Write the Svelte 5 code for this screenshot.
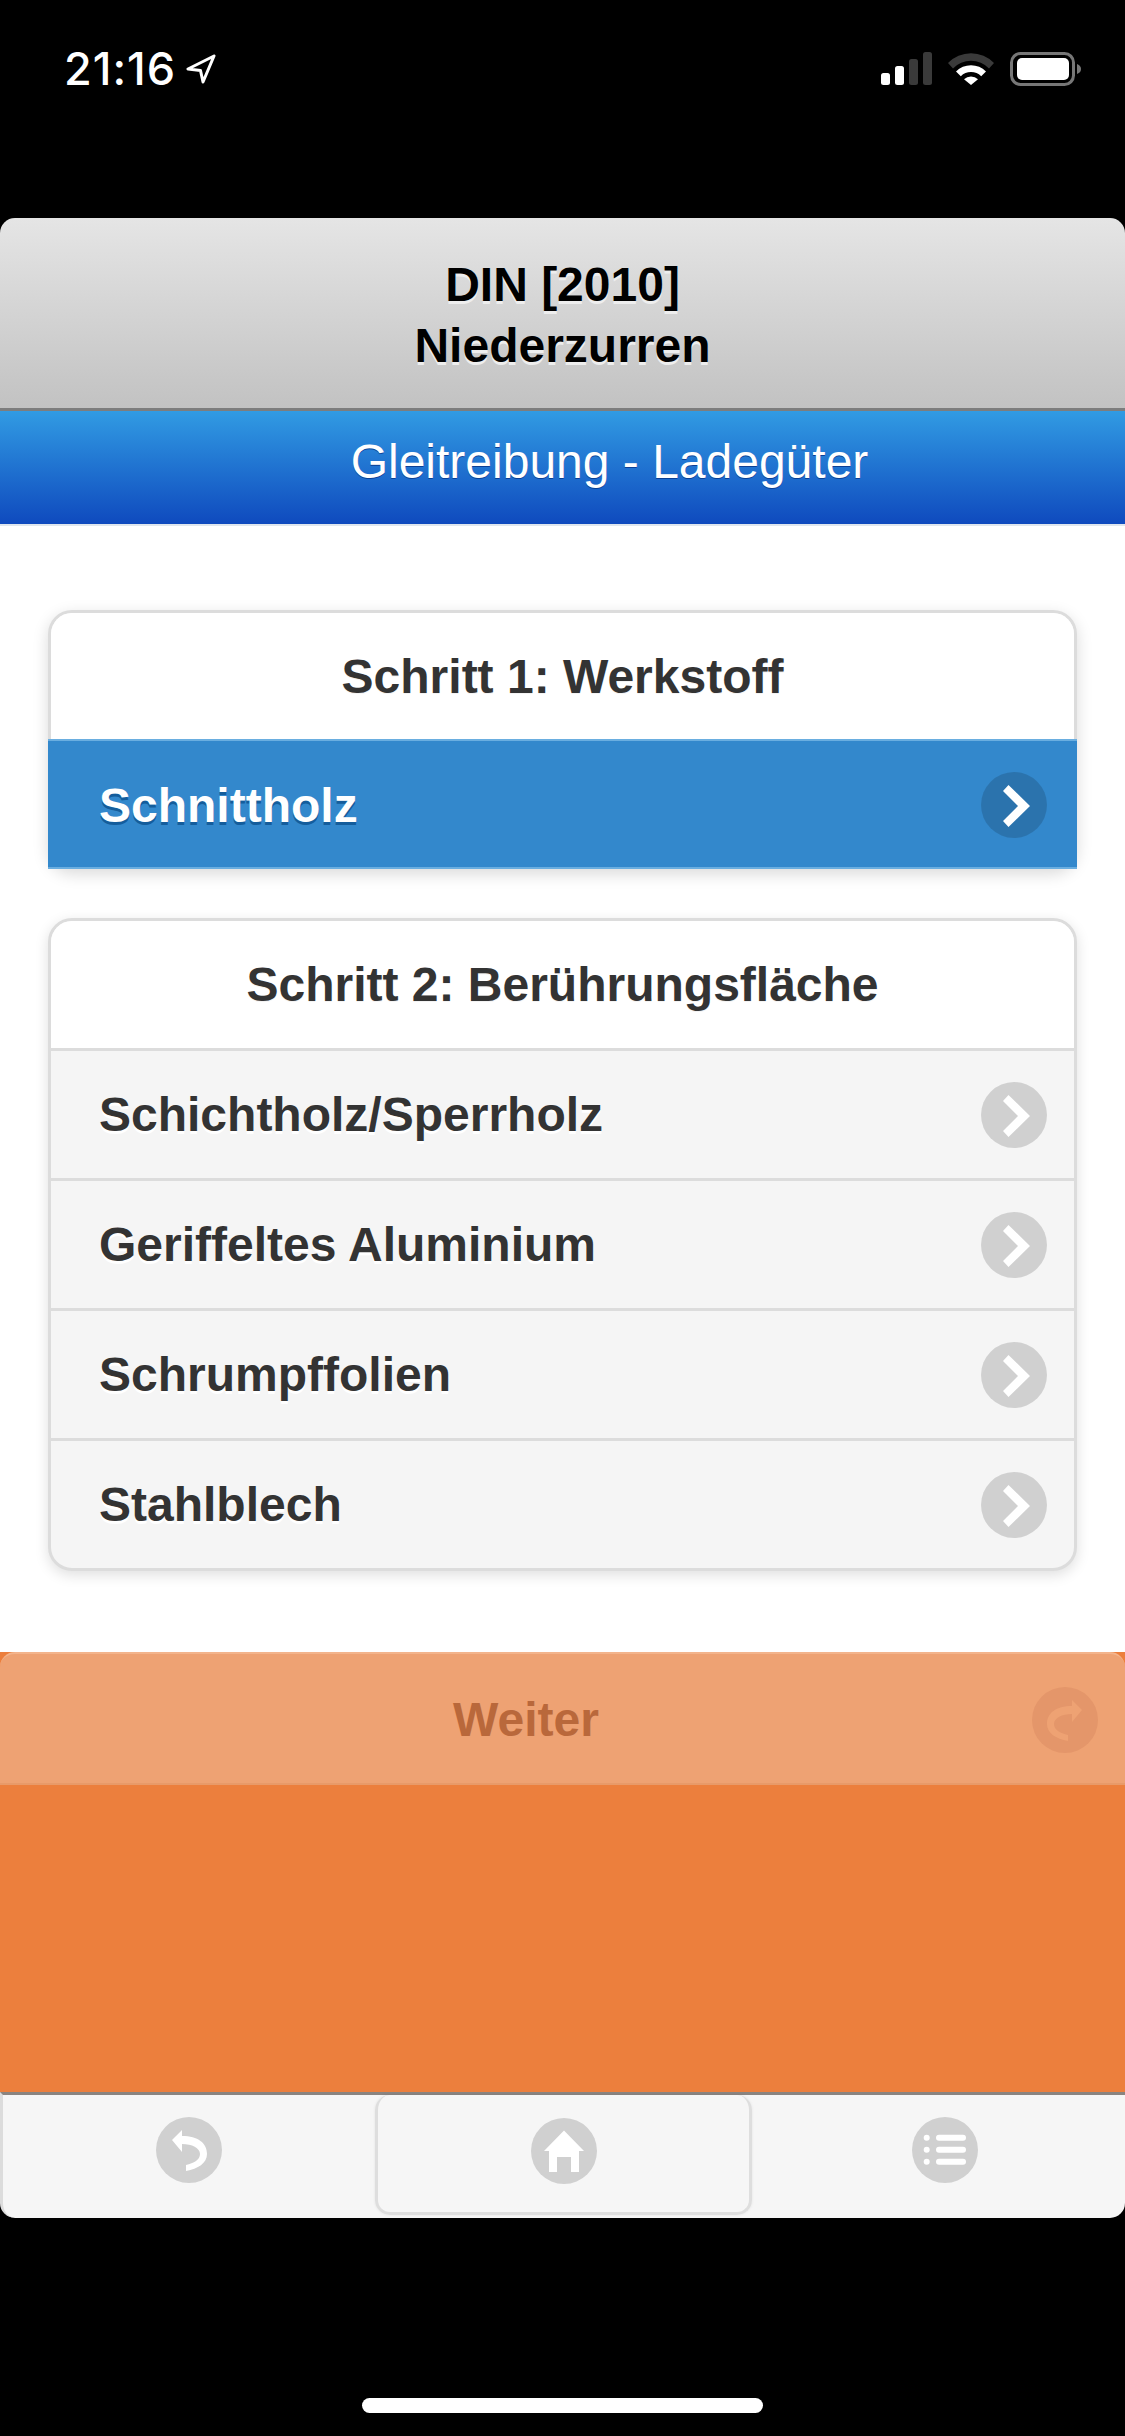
<script>
  const rows = ['Schichtholz/Sperrholz', 'Geriffeltes Aluminium', 'Schrumpffolien', 'Stahlblech'];
</script>

{#snippet chevron()}
  <svg class="ic" viewBox="0 0 66 66" aria-hidden="true">
    <path d="M27.500 13 L49 34 L27.500 55 L22 49 L37 34 L22 19 Z" fill="#fff" />
  </svg>
{/snippet}

<div class="phone">
  <header class="status">
    <div class="time">21:16
      <svg class="loc" viewBox="0 0 30 30" aria-hidden="true"><path d="M28 2 L2 15 L14.500 16.500 L17 28 Z" fill="none" stroke="#fff" stroke-width="3" stroke-linejoin="round" /></svg>
    </div>
    <div class="sys">
      <svg width="51" height="33" viewBox="0 0 51 33" aria-hidden="true">
        <rect x="0" y="21" width="9" height="12" rx="2.500" fill="#fff" />
        <rect x="14" y="14" width="9" height="19" rx="2.500" fill="#fff" />
        <rect x="28" y="7" width="9" height="26" rx="2.500" fill="#3a3a3a" />
        <rect x="42" y="0" width="9" height="33" rx="2.500" fill="#3a3a3a" />
      </svg>
      <svg width="46" height="33" viewBox="0 0 46 33" aria-hidden="true">
        <path d="M0 11 A32 32 0 0 1 46 11 L41 16.500 A25 25 0 0 0 5 16.500 Z" fill="#3a3a3a" />
        <path d="M8 19.500 A21 21 0 0 1 38 19.500 L33.200 24.300 A14.500 14.500 0 0 0 12.800 24.300 Z" fill="#fff" />
        <path d="M16 27.300 A10 10 0 0 1 30 27.300 L23 33 Z" fill="#fff" />
      </svg>
      <svg width="72" height="34" viewBox="0 0 72 34" aria-hidden="true">
        <rect x="1.500" y="1.500" width="62" height="31" rx="9" fill="none" stroke="#777" stroke-width="3" />
        <rect x="7" y="6" width="52" height="22" rx="5" fill="#fff" />
        <path d="M67 12 C70 13 71 15 71 17 C71 19 70 21 67 22 Z" fill="#777" />
      </svg>
    </div>
  </header>

  <div class="title">DIN [2010]<br />Niederzurren</div>
  <div class="subtitle"><span>Gleitreibung - Ladegüter</span></div>

  <main class="content">
    <section class="card first">
      <h2>Schritt 1: Werkstoff</h2>
      <div class="row active"><span>Schnittholz</span><i class="dot">{@render chevron()}</i></div>
    </section>
    <section class="card">
      <h2>Schritt 2: Berührungsfläche</h2>
      {#each rows as r}
        <div class="row"><span>{r}</span><i class="dot">{@render chevron()}</i></div>
      {/each}
    </section>
  </main>

  <div class="orange">
    <div class="next">
      <span>Weiter</span>
      <i class="dot">
        <svg class="ic" viewBox="0 0 66 66" aria-hidden="true">
          <path d="M50 23 L40 13 L40 19 C24 19 15 26 15 37 C15 46 24 52 36 54 L36 48 C28 46 22 43 22 37 C22 31 30 27 40 27 L40 35 Z" fill="#eea273" />
        </svg>
      </i>
    </div>
  </div>

  <nav class="nav">
    <div class="cell">
      <i class="dot">
        <svg class="ic" viewBox="0 0 66 66" aria-hidden="true">
          <path d="M16 23 L26 13 L26 19 C42 19 51 26 51 37 C51 46 42 52 30 54 L30 48 C38 46 44 43 44 37 C44 31 36 27 26 27 L26 35 Z" fill="#fff" />
        </svg>
      </i>
    </div>
    <div class="cell home">
      <i class="dot">
        <svg class="ic" viewBox="0 0 66 66" aria-hidden="true">
          <path d="M33 12.500 L53 33 L48 33 L48 54 L40 54 L40 39 L26 39 L26 54 L18 54 L18 33 L13 33 Z" fill="#fff" />
        </svg>
      </i>
    </div>
    <div class="cell last">
      <i class="dot">
        <svg class="ic" viewBox="0 0 66 66" aria-hidden="true">
          <circle cx="14.700" cy="20.700" r="3" fill="#fff" /><circle cx="14.700" cy="32.700" r="3" fill="#fff" /><circle cx="14.700" cy="44.700" r="3" fill="#fff" />
          <rect x="24" y="17.700" width="30" height="6" rx="3" fill="#fff" />
          <rect x="24" y="29.700" width="30" height="6" rx="3" fill="#fff" />
          <rect x="24" y="41.700" width="30" height="6" rx="3" fill="#fff" />
        </svg>
      </i>
    </div>
  </nav>

  <div class="bottom"><div class="indicator"></div></div>
</div>

<style>
  :global(body) { margin: 0; background: #000; }
  .phone {
    width: 1125px;
    height: 2436px;
    background: #000;
    display: flex;
    flex-direction: column;
    font-family: "Liberation Sans", Arial, sans-serif;
    overflow: hidden;
  }
  .status {
    height: 218px;
    flex: none;
    box-sizing: border-box;
    padding: 46px 43px 0 64px;
    display: flex;
    justify-content: space-between;
    align-items: flex-start;
    color: #fff;
  }
  .time { font: 500 45px/46px Inter, "Liberation Sans", sans-serif; letter-spacing: 1px; display: flex; align-items: center; gap: 10px; }
  .loc { width: 30px; height: 30px; }
  .sys { display: flex; gap: 16px; align-items: flex-start; padding-top: 6px; }

  .title {
    flex: none;
    box-sizing: border-box;
    padding-top: 36px;
    border-radius: 15px 15px 0 0;
    background: linear-gradient(#e5e5e5, #c2c2c2);
    border-bottom: 3px solid #7d7d7d;
    height: 193px;
    text-align: center;
    font-weight: 700;
    font-size: 48px;
    line-height: 61px;
    color: #000;
    text-shadow: 0 3px 0 #eee;
  }
  .subtitle {
    height: 113px;
    flex: none;
    display: flex;
    align-items: center;
    justify-content: center;
    padding: 0 0 12px 94px;
    box-sizing: border-box;
    background: linear-gradient(#319be3, #0f4abe);
    color: #fff;
    font-size: 48px;
    text-shadow: 0 1px 0 #0b3f95;
  }
  .content {
    background: #fff;
    flex: none;
    height: 1128px;
    box-sizing: border-box;
    border-top: 2px solid #dfe6ee;
    padding: 84px 48px 0;
    display: flex;
    flex-direction: column;
    gap: 49px;
  }
  .card {
    border: 3px solid #dcdcdc;
    border-radius: 24px;
    box-shadow: 0 4px 14px rgba(0, 0, 0, .13);
    background: #f5f5f5;
    width: 1029px;
    box-sizing: border-box;
  }
  .card.first { border-bottom: 0; box-shadow: 0 5px 16px rgba(0, 0, 0, .15); }
  h2 {
    margin: 0;
    height: 127px;
    box-sizing: border-box;
    background: #fff;
    border-radius: 21px 21px 0 0;
    color: #333;
    font-size: 48px;
    font-weight: 700;
    line-height: 127px;
    text-align: center;
    text-shadow: 0 1px 0 #f3f3f3;
  }
  .card.first h2 { height: 126px; }
  .row {
    height: 130px;
    box-sizing: border-box;
    border-top: 3px solid #dcdcdc;
    padding: 0 27px 0 48px;
    display: flex;
    align-items: center;
    justify-content: space-between;
    color: #333;
    font-size: 48px;
    font-weight: 700;
    text-shadow: 0 3px 0 #fff;
  }
  .card > .row:last-child { border-radius: 0 0 21px 21px; }
  .card.first .row {
    margin: 0 -3px;
    padding: 2px 30px 0 51px;
    border-radius: 0;
    border-top: 2px solid #6aaee0;
    border-bottom: 2px solid #6aaee0;
    background: #3388cc;
    color: #fff;
    text-shadow: 0 3px 0 #145d9c;
  }
  .dot {
    display: block;
    width: 66px;
    height: 66px;
    border-radius: 50%;
    background: rgba(0, 0, 0, .15);
    flex: none;
  }
  .ic { display: block; width: 66px; height: 66px; }

  .orange {
    flex: none;
    height: 440px;
    background: #ec7f3d;
  }
  .next {
    height: 133px;
    box-sizing: border-box;
    border-radius: 15px 15px 0 0;
    background: #eea273;
    border-top: 2px solid #f3b48c;
    border-bottom: 2px solid #e89a69;
    padding: 2px 27px 0 453px;
    display: flex;
    align-items: center;
    justify-content: space-between;
    color: #b9683b;
    font-size: 48px;
    font-weight: 700;
  }
  .next .dot { background: #e4966a; }

  .nav {
    flex: none;
    height: 126px;
    box-sizing: border-box;
    background: #f6f6f6;
    border-top: 3px solid #8a8480;
    border-left: 3px solid #dcdcdc;
    border-radius: 0 0 15px 15px;
    display: grid;
    grid-template-columns: 372px 377px 1fr;
  }
  .cell { display: flex; align-items: center; justify-content: center; padding-bottom: 14px; }
  .cell .dot { background: #d0d0d0; }
  .cell.last { padding-left: 13px; }
  .cell.home {
    border: 3px solid #dedede;
    border-top: 0;
    border-radius: 15px;
    margin-bottom: 3px;
    padding-bottom: 5px;
    box-shadow: 0 0 3px rgba(0, 0, 0, .08);
  }
  .bottom { flex: 1; position: relative; }
  .indicator {
    position: absolute;
    left: 362px;
    bottom: 23px;
    width: 401px;
    height: 15px;
    border-radius: 8px;
    background: #fff;
  }
</style>
